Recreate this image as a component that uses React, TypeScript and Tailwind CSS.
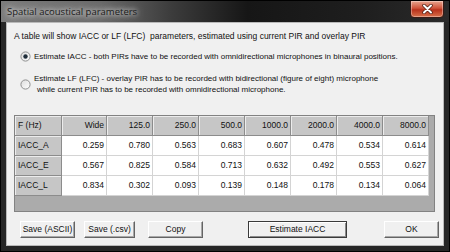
import React from "react";

const cols = ["Wide", "125.0", "250.0", "500.0", "1000.0", "2000.0", "4000.0", "8000.0"];
const widths = ["w-[45px]", "w-[46px]", "w-[46px]", "w-[46px]", "w-[46px]", "w-[46px]", "w-[46px]", "w-[46px]"];

const rows: { label: string; values: string[] }[] = [
  { label: "IACC_A", values: ["0.259", "0.780", "0.563", "0.683", "0.607", "0.478", "0.534", "0.614"] },
  { label: "IACC_E", values: ["0.567", "0.825", "0.584", "0.713", "0.632", "0.492", "0.553", "0.627"] },
  { label: "IACC_L", values: ["0.834", "0.302", "0.093", "0.139", "0.148", "0.178", "0.134", "0.064"] },
];

function Radio({ checked }: { checked?: boolean }) {
  return (
    <svg width="11" height="11" viewBox="0 0 11 11" className="shrink-0">
      <defs>
        <linearGradient id={checked ? "rg1" : "rg2"} x1="0" y1="0" x2="1" y2="1">
          <stop offset="0" stopColor="#dcdcdc" />
          <stop offset="1" stopColor="#ffffff" />
        </linearGradient>
      </defs>
      <circle cx="5.5" cy="5.5" r="4.6" fill={`url(#${checked ? "rg1" : "rg2"})`} stroke="#8e8f8f" strokeWidth="1" />
      {checked ? <circle cx="5.5" cy="5.5" r="2.2" fill="#1f2d3a" /> : null}
    </svg>
  );
}

function Btn({ label, className, isDefault }: { label: string; className: string; isDefault?: boolean }) {
  return (
    <div
      className={`h-[17px] flex items-center justify-center bg-[#f0f0f0] text-[#111] border ${
        isDefault
          ? "border-[#3a3a3a] shadow-[inset_1px_1px_0_#fff,inset_-1px_-1px_0_#8a8a8a]"
          : "border-t-white border-l-white border-b-[#646464] border-r-[#646464] shadow-[inset_-1px_-1px_0_#a8a8a8]"
      } ${className}`}
    >
      {label}
    </div>
  );
}

export default function App() {
  return (
    <div className="w-[450px] h-[252px] overflow-hidden flex flex-col bg-[#262626] border border-black font-['Liberation_Sans',Arial,sans-serif] text-[8.5px] leading-[11px] text-[#111]">
      {/* title bar */}
      <div className="relative h-[21px] shrink-0 flex items-center pl-[6px] bg-[linear-gradient(90deg,#7c7c7c_0%,#6a6a6a_22%,#3c3c3c_38%,#161616_55%,#1e1e1e_80%,#2a2a2a_100%)]">
        <span className="text-[9.5px] text-[#1a1a1a] font-['Open_Sans',sans-serif] [text-shadow:0_0_5px_#fff,0_0_9px_rgba(255,255,255,0.8)]">
          Spatial acoustical parameters
        </span>
        <div className="absolute right-[5px] top-[-1px] w-[34px] h-[18px] rounded-b-[4px] border border-[#3a1a14] bg-[linear-gradient(180deg,#e8a58f_0%,#d0533a_45%,#b8321c_55%,#d8704a_100%)] shadow-[inset_0_0_0_1px_rgba(255,255,255,0.35)] flex items-center justify-center">
          <svg width="11" height="10" viewBox="0 0 11 10">
            <path d="M2 1.5 L9 8.5 M9 1.5 L2 8.5" stroke="#4a1a10" strokeWidth="3.4" strokeLinecap="round" />
            <path d="M2 1.5 L9 8.5 M9 1.5 L2 8.5" stroke="#ffffff" strokeWidth="2" strokeLinecap="round" />
          </svg>
        </div>
      </div>

      {/* client area */}
      <div className="mx-[5px] h-[224px] shrink-0 bg-[#f0f0f0] border border-[#b9b9b9] flex flex-col pl-[7px]">
        <div className="mt-[8px] h-[11px] whitespace-nowrap">
          A table will show IACC or LF (LFC)&nbsp; parameters, estimated using current PIR and overlay PIR
        </div>

        <div className="mt-[9px] h-[11px] flex items-center pl-[6px] whitespace-nowrap text-[8px]">
          <Radio checked />
          <span className="ml-[3px]">Estimate IACC - both PIRs have to be recorded with omnidirectional microphones in binaural positions.</span>
        </div>

        <div className="mt-[11px] h-[22px] flex items-center pl-[6px] whitespace-nowrap text-[8px]">
          <Radio />
          <div className="ml-[3px] flex flex-col">
            <span>Estimate LF (LFC) - overlay PIR has to be recorded with bidirectional (figure of eight) microphone</span>
            <span className="pl-[3px]">while current PIR has to be recorded with omnidirectional microphone.</span>
          </div>
        </div>

        {/* table */}
        <div className="mt-[20px] w-[421px] h-[97px] border border-[#828282] bg-[#ababab] flex flex-col">
          <div className="flex h-[20px]">
            <div className="w-[47px] h-[20px] flex items-center pl-[3px] bg-[#c6c6c6] border-r border-b border-[#8c8c8c] shadow-[inset_1px_1px_0_#ececec]">
              F (Hz)
            </div>
            {cols.map((c, i) => (
              <div
                key={c}
                className={`${widths[i]} h-[20px] flex items-center justify-end pr-[2px] bg-[#c6c6c6] border-r border-b border-[#8c8c8c] shadow-[inset_1px_1px_0_#ececec]`}
              >
                {c}
              </div>
            ))}
          </div>
          {rows.map((r) => (
            <div key={r.label} className="flex h-[20px]">
              <div className="w-[47px] h-[20px] flex items-center pl-[3px] bg-[#c6c6c6] border-r border-b border-[#8c8c8c] shadow-[inset_1px_1px_0_#ececec]">
                {r.label}
              </div>
              {r.values.map((v, i) => (
                <div
                  key={i}
                  className={`${widths[i]} h-[20px] flex items-center justify-end pr-[2px] bg-white border-r border-b border-[#d4d4d4]`}
                >
                  {v}
                </div>
              ))}
            </div>
          ))}
        </div>

        {/* buttons */}
        <div className="mt-[9px] flex">
          <Btn label="Save (ASCII)" className="ml-[6px] w-[55px]" />
          <Btn label="Save (.csv)" className="ml-[9px] w-[51px]" />
          <Btn label="Copy" className="ml-[13px] w-[55px]" />
          <Btn label="Estimate IACC" className="ml-[45px] w-[99px]" isDefault />
          <Btn label="OK" className="ml-[37px] w-[55px]" />
        </div>
      </div>
    </div>
  );
}
